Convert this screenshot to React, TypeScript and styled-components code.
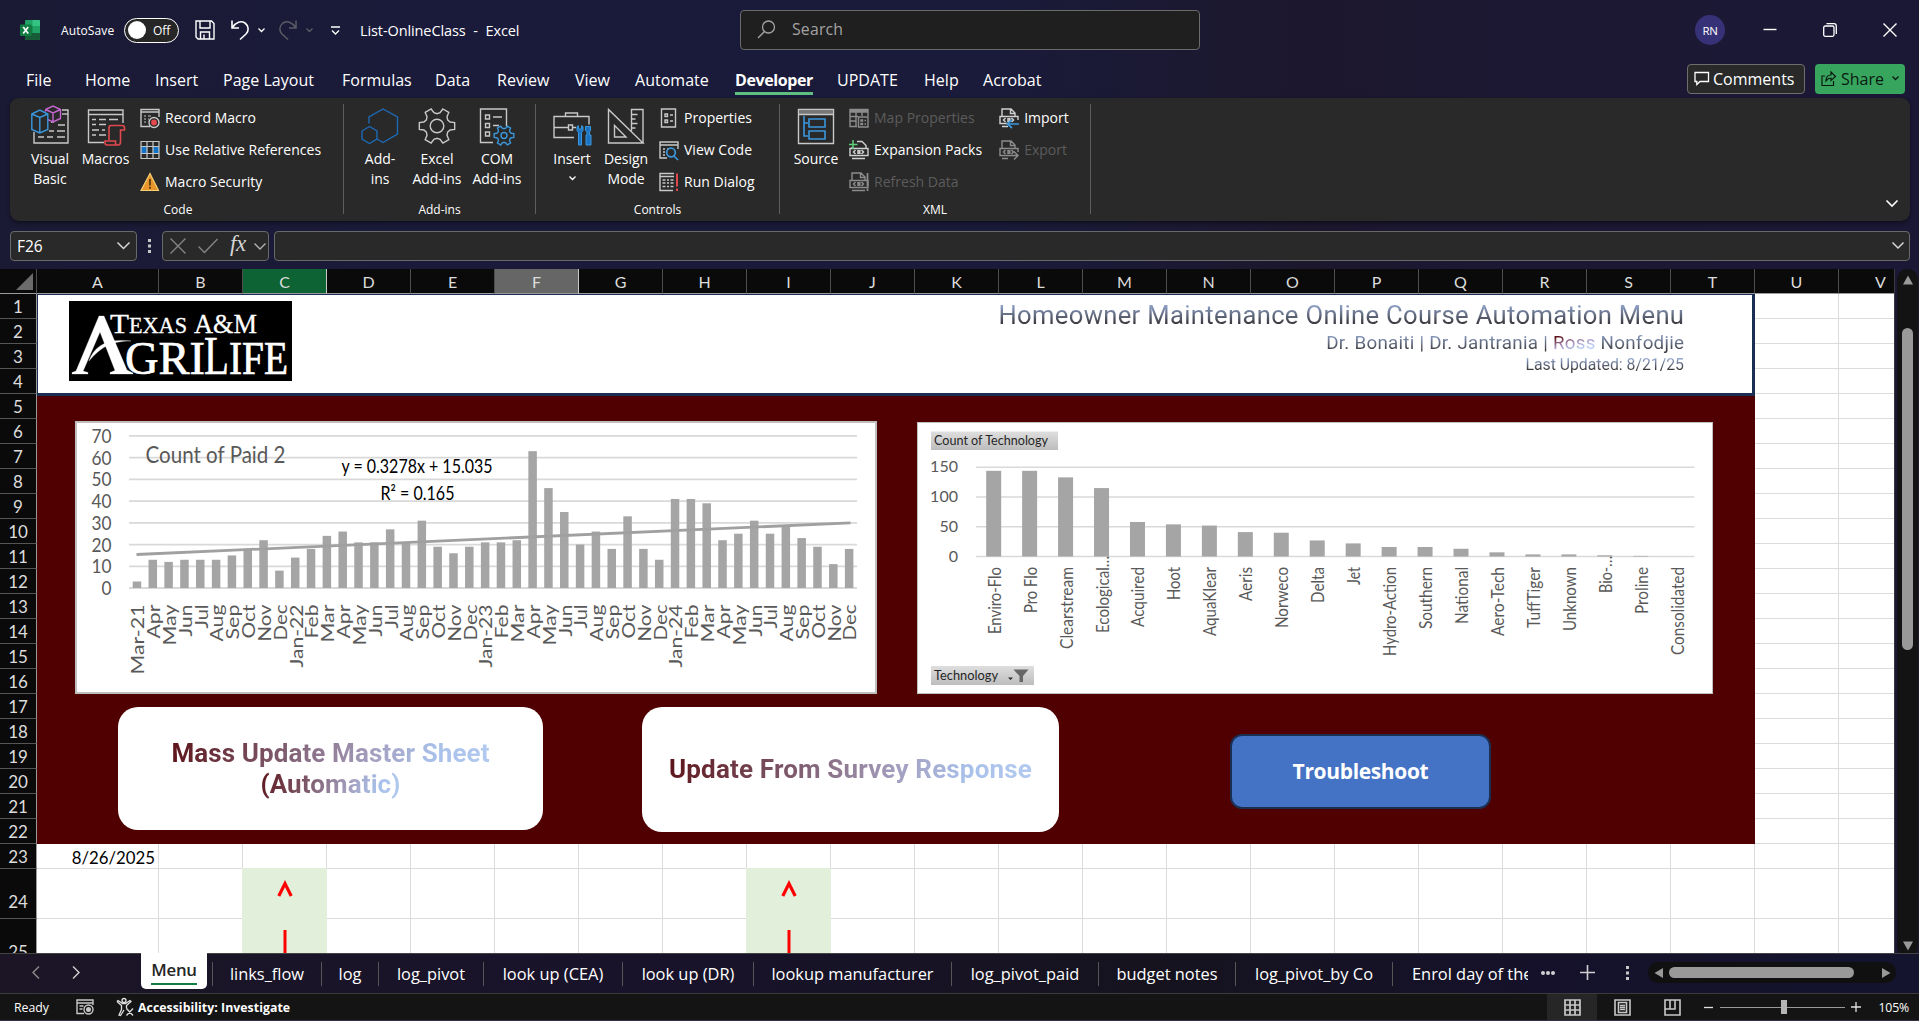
import React from "react";
import styled, { createGlobalStyle, css } from "styled-components";

const UI = `"Open Sans", "Noto Sans", sans-serif`;
const CALIBRI = `Lato, "Open Sans", sans-serif`;

const Global = createGlobalStyle`
  * { box-sizing: border-box; }
  html, body { margin: 0; padding: 0; overflow: hidden; }
  body { font-family: ${UI}; color: #fff; background: #1a1935; }
  svg { display: block; flex: none; overflow: visible; }
`;

const Window = styled.div`
  width: 1919px;
  height: 1021px;
  display: flex;
  flex-direction: column;
  background: linear-gradient(90deg, #1b1a35 0%, #1a1b3a 22%, #1a1b3a 52%, #1c172d 68%, #1c1833 78%, #1b1836 100%);
`;

/* ---------- title bar ---------- */
const TitleBar = styled.header`
  height: 60px;
  flex: none;
  display: flex;
  align-items: center;
`;
const TitleLeft = styled.div`
  width: 740px;
  padding-left: 20px;
  display: flex;
  align-items: center;
`;
const AutoSave = styled.span`
  font-size: 12px;
  margin: 1px 9px 0 21px;
  width: 54px;
  white-space: nowrap;
  letter-spacing: 0.1px;
`;
const Toggle = styled.div`
  width: 55px;
  height: 25px;
  border: 1px solid #fff;
  border-radius: 13px;
  background: #262626;
  display: flex;
  align-items: center;
  gap: 7px;
  padding-left: 3px;
  font-size: 12px;
  margin-right: 16px;
`;
const Knob = styled.i`
  width: 18px;
  height: 18px;
  border-radius: 50%;
  background: #fff;
`;
const Gap = styled.span<{ $w: number }>`
  width: ${(p) => p.$w}px;
  flex: none;
`;
const DocTitle = styled.span`
  font-size: 14.5px;
  word-spacing: 4px;
  letter-spacing: -0.1px;
  white-space: nowrap;
`;
const SearchBox = styled.div`
  width: 460px;
  height: 40px;
  border: 1px solid #6a6a6a;
  border-radius: 4px;
  background: #1f1f1f;
  color: #a3a3a3;
  display: flex;
  align-items: center;
  gap: 16px;
  padding: 0 0 2px 16px;
  font-size: 15.8px;
  letter-spacing: 0.2px;
`;
const TitleRight = styled.div`
  flex: 1;
  display: flex;
  align-items: center;
  padding-left: 495px;
`;
const Avatar = styled.div`
  width: 30px;
  height: 30px;
  border-radius: 50%;
  background: #373277;
  display: grid;
  place-items: center;
  font-size: 11.5px;
  letter-spacing: -0.4px;
  margin-right: 38px;
`;

/* ---------- ribbon tabs ---------- */
const TabRow = styled.nav`
  height: 38px;
  flex: none;
  display: flex;
  align-items: flex-start;
  padding: 4px 14px 0 26px;
`;
const RibbonTab = styled.div<{ $w: number; $on?: boolean }>`
  width: ${(p) => p.$w}px;
  height: 31px;
  line-height: 33px;
  font-size: 16px;
  letter-spacing: 0.02px;
  white-space: nowrap;
  span {
    display: inline-block;
    height: 31px;
    ${(p) => p.$on && css`
      font-weight: 700;
      letter-spacing: -0.4px;
      border-bottom: 3px solid #5fbf80;
    `}
  }
`;
const Spacer = styled.div`
  flex: 1;
`;
const CommentsButton = styled.button`
  width: 118px;
  height: 30px;
  border: 1px solid #6e6e6e;
  border-radius: 4px;
  background: #292929;
  color: #fff;
  display: flex;
  align-items: center;
  gap: 4px;
  padding: 0 0 1px 6px;
  font: 16px ${UI};
  letter-spacing: 0;
  margin-right: 10px;
`;
const ShareButton = styled(CommentsButton)`
  width: 90px;
  border: 0;
  background: #38a55f;
  color: #0a1a10;
  gap: 5px;
  margin: 0;
  svg:last-child { margin-left: 3px; }
`;

/* ---------- ribbon ---------- */
const Ribbon = styled.section`
  height: 123px;
  margin: 0 9px 0 10px;
  flex: none;
  border-radius: 9px;
  background: #292929;
  display: flex;
  padding-top: 6px;
  box-shadow: 0 2px 4px rgba(0, 0, 0, 0.45);
`;
const Group = styled.div<{ $w: number }>`
  width: ${(p) => p.$w}px;
  height: 110px;
  border-right: 1px solid #5e5e5e;
  display: flex;
  flex-direction: column;
`;
const GroupBody = styled.div<{ $pl: number }>`
  height: 96px;
  flex: none;
  padding-left: ${(p) => p.$pl}px;
  display: flex;
  align-items: flex-start;
`;
const GroupName = styled.div<{ $left?: number }>`
  font-size: 12px;
  line-height: 19px;
  text-align: center;
  padding-left: ${(p) => p.$left ?? 0}px;
`;
const BigButton = styled.div<{ $w: number }>`
  width: ${(p) => p.$w}px;
  flex: none;
  display: flex;
  flex-direction: column;
  align-items: center;
`;
const BigIcon = styled.div`
  height: 45px;
  padding-top: 2px;
`;
const BigLabel = styled.span`
  font-size: 14px;
  line-height: 20px;
  text-align: center;
  white-space: pre;
  letter-spacing: -0.05px;
`;
const MenuMark = styled.span`
  padding-top: 7px;
`;
const SmallStack = styled.div<{ $ml?: number }>`
  display: flex;
  flex-direction: column;
  margin-left: ${(p) => p.$ml ?? 0}px;
`;
const SmallButton = styled.div<{ $off?: boolean }>`
  height: 32px;
  display: flex;
  align-items: center;
  gap: 5px;
  font-size: 14px;
  letter-spacing: 0.02px;
  white-space: nowrap;
  padding-bottom: 5px;
  span { color: ${(p) => (p.$off ? "#5c5c5c" : "#fff")}; }
`;
const RibbonEnd = styled.div`
  flex: 1;
  display: flex;
  align-items: flex-end;
  justify-content: flex-end;
  padding: 0 12px 14px 0;
`;

/* ---------- formula bar ---------- */
const FormulaRow = styled.div`
  height: 48px;
  flex: none;
  display: flex;
  align-items: center;
  padding: 2px 9px 0 10px;
`;
const Box = styled.div<{ $w?: number }>`
  ${(p) => (p.$w ? `width: ${p.$w}px;` : "flex: 1;")}
  height: 30px;
  border: 1px solid #696969;
  border-radius: 4px;
  background: #292929;
  display: flex;
  align-items: center;
`;
const NameBox = styled(Box)`
  justify-content: space-between;
  padding: 0 6px;
  font-size: 15.5px;
  margin-right: 11px;
`;
const FxBox = styled(Box)`
  padding-left: 7px;
  margin: 0 5px 0 11px;
`;
const Fx = styled.span`
  font: italic 23px "Liberation Serif", serif;
  letter-spacing: -0.5px;
  color: #d6d6d6;
  margin: -4px 8px 0 12px;
`;
const FormulaInput = styled(Box)`
  justify-content: flex-end;
  padding: 0 5px 2px 0;
`;

/* ---------- sheet ---------- */
const SheetArea = styled.main`
  height: 684px;
  flex: none;
  display: flex;
`;
const Sheet = styled.div`
  width: 1894px;
  height: 684px;
  overflow: hidden;
  position: relative;
  background: #fff;
`;
const GridRow = styled.div<{ $h: number }>`
  display: grid;
  grid-template-columns: 37px 122px repeat(20, 84px) 84px;
  grid-template-rows: ${(p) => p.$h}px;
  height: ${(p) => p.$h}px;
  width: 1923px;
`;
const HeadCell = styled.div<{ $sel?: "green" | "gray" }>`
  background: ${(p) => (p.$sel === "green" ? "#0e6335" : p.$sel === "gray" ? "#666" : "#0a0a0a")};
  border-right: 1px solid ${(p) => (p.$sel ? "#c9c9c9" : "#4d4d4d")};
  border-bottom: 1px solid #9a9a9a;
  color: #dcdcdc;
  font: 16px/25px ${CALIBRI};
  text-align: center;
`;
const Corner = styled.div`
  background: #0a0a0a;
  border-right: 1px solid #4d4d4d;
  border-bottom: 1px solid #9a9a9a;
  display: flex;
  align-items: flex-end;
  justify-content: flex-end;
  padding: 0 3px 3px 0;
`;
const RowHead = styled.div<{ $tall: boolean }>`
  background: #0a0a0a;
  border-right: 1px solid #9a9a9a;
  border-bottom: 1px solid #555;
  color: #dcdcdc;
  font: 17px ${CALIBRI};
  display: grid;
  place-items: center;
  overflow: hidden;
  padding-top: ${(p) => (p.$tall ? 16 : 1)}px;
`;
const Cell = styled.div<{ $green?: boolean }>`
  border-right: 1px solid #dcdcdc;
  border-bottom: 1px solid #dcdcdc;
  color: #000;
  font: 16.8px/27px ${CALIBRI};
  text-align: right;
  padding-right: 3px;
  ${(p) => p.$green && css`
    background: #e2efda;
    border-color: #e2efda;
    margin-left: -1px;
    margin-top: -1px;
    padding: 0 0 0 1px;
    display: flex;
    justify-content: center;
  `}
`;

/* shapes floating over the cells */
const Shape = styled.div<{ $x: number; $y: number; $w: number; $h: number }>`
  position: absolute;
  left: ${(p) => p.$x}px;
  top: ${(p) => p.$y - 269}px;
  width: ${(p) => p.$w}px;
  height: ${(p) => p.$h}px;
`;
const Banner = styled(Shape)`
  background: #fff;
  border: solid #1b2f52;
  border-width: 1px 3px 3px 1px;
  padding: 6px 68px 0 31px;
  display: flex;
  justify-content: space-between;
`;
const Backdrop = styled(Shape)`
  background: #500000;
`;
const Heading = styled.div`
  display: flex;
  flex-direction: column;
  align-items: flex-end;
  font-family: Roboto, sans-serif;
  white-space: nowrap;
  margin-top: -1px;
`;
const HeadLine = styled.div<{ $size: number; $lh: number; $ls: number }>`
  display: flex;
  white-space: pre;
  font-size: ${(p) => p.$size}px;
  line-height: ${(p) => p.$lh}px;
  letter-spacing: ${(p) => p.$ls}px;
  margin-right: -${(p) => p.$ls}px;
`;
const Steel = styled.span`
  color: transparent;
  background: linear-gradient(180deg, #93a7cf 15%, #3b3b3f 78%);
  background-clip: text;
`;
const Ross = styled.span`
  color: transparent;
  background: linear-gradient(165deg, #5f1219 22%, #a893bd 48%, #b8cdf5 70%);
  background-clip: text;
`;
const ChartFrame = styled(Shape)<{ $b: number }>`
  background: #fff;
  border: ${(p) => p.$b}px solid #bfbfbf;
  svg { margin: -${(p) => p.$b}px; }
`;
const Macro = styled(Shape)`
  background: #fff;
  border-radius: 20px;
  display: flex;
  flex-direction: column;
  align-items: center;
  justify-content: center;
  font: 700 26px/31px Roboto, sans-serif;
  white-space: nowrap;
`;
const Shaded = styled.span<{ $ls: number }>`
  letter-spacing: ${(p) => p.$ls}px;
  color: transparent;
  background: linear-gradient(108deg, #5c1318 0%, #7e5a6c 35%, #a39dbd 62%, #a9c1ea 82%, #b3caf0 100%);
  background-clip: text;
`;
const Trouble = styled(Shape)`
  background: #4472c4;
  border: 2px solid #1b2f52;
  border-radius: 12px;
  display: grid;
  place-items: center;
  font: 700 21px ${UI};
  letter-spacing: -0.35px;
  padding-bottom: 2px;
`;
const ScrollGutter = styled.div`
  width: 25px;
  padding: 0 2px;
  border-left: 1px solid #3a3a3a;
`;
const VTrack = styled.div`
  height: 688px;
  width: 21px;
  border-radius: 10px;
  background: #131313;
  display: flex;
  flex-direction: column;
  align-items: center;
  padding: 6px 0;
`;
const VThumb = styled.div`
  width: 11px;
  height: 322px;
  border-radius: 6px;
  background: #999;
  margin: 43px 0 auto;
`;

/* ---------- sheet tabs ---------- */
const SheetTabs = styled.div`
  height: 40px;
  flex: none;
  display: flex;
  align-items: flex-start;
  background: linear-gradient(90deg, #1b1526 0%, #18132a 35%, #16131f 60%, #15112a 80%, #14142e 100%);
  border-top: 1px solid #444;
`;
const TabNav = styled.div`
  width: 141px;
  height: 37px;
  display: flex;
  align-items: center;
  gap: 32px;
  padding-left: 32px;
`;
const ActiveTab = styled.div`
  width: 66px;
  height: 36px;
  margin-top: -1px;
  background: #fff;
  border-radius: 0 0 5px 5px;
  color: #262626;
  font: 600 16.8px/33px ${UI};
  letter-spacing: -0.2px;
  display: flex;
  justify-content: center;
  margin-right: 5px;
  span { height: 32px; border-bottom: 2px solid #107c41; }
`;
const SheetTab = styled.div<{ $w: number; $last?: boolean }>`
  width: ${(p) => p.$w}px;
  height: 24px;
  margin-top: 8px;
  border-left: 1px solid #565656;
  font-size: 16.4px;
  letter-spacing: 0;
  line-height: 24px;
  text-align: ${(p) => (p.$last ? "left" : "center")};
  padding-left: ${(p) => (p.$last ? 19 : 0)}px;
  white-space: nowrap;
  overflow: hidden;
`;
const TabTools = styled.div`
  height: 37px;
  flex: 1;
  display: flex;
  align-items: center;
  padding-left: 13px;
`;
const HTrack = styled.div`
  width: 248px;
  height: 21px;
  border-radius: 10px;
  background: #101010;
  display: flex;
  align-items: center;
  padding: 0 5px 0 6px;
  justify-content: space-between;
`;
const HThumb = styled.div`
  width: 185px;
  height: 11px;
  border-radius: 6px;
  background: #999;
  margin: 0 auto 0 5px;
`;

/* ---------- status bar ---------- */
const StatusBar = styled.footer`
  height: 28px;
  flex: none;
  background: #141414;
  border-top: 1px solid #3b3b3b;
  border-bottom: 1px solid #30304a;
  display: flex;
  align-items: center;
  font-size: 12.3px;
  padding: 0 10px 0 14px;
`;
const Ready = styled.span`
  width: 62px;
`;
const Access = styled.b`
  margin-left: 4px;
  letter-spacing: 0.04px;
`;
const ViewButton = styled.div<{ $on?: boolean }>`
  width: 50px;
  height: 26px;
  display: grid;
  place-items: center;
  background: ${(p) => (p.$on ? "#262626" : "none")};
`;
const Slider = styled.div`
  width: 125px;
  height: 14px;
  margin: 0 6px 0 7px;
  background: linear-gradient(#9a9a9a, #9a9a9a) center / 100% 1px no-repeat;
  padding-left: 61px;
`;
const Handle = styled.div`
  width: 6px;
  height: 14px;
  background: #b5b5b5;
`;
const Zoom = styled.span`
  width: 48px;
  text-align: right;
  letter-spacing: -0.2px;
`;

/* ---------- icons ---------- */
const Chev = ({ w = 8, c = "#fff", s = 1.3 }: { w?: number; c?: string; s?: number }) => (
  <svg width={w} height={w / 2 + 1} fill="none" stroke={c} strokeWidth={s}>
    <path d={`M0.5 0.5 L${w / 2} ${w / 2} L${w - 0.5} 0.5`} />
  </svg>
);

const Icon = ({ w = 20, h = 20, c = "#c8c8c8", s = 1.4, children }: any) => (
  <svg width={w} height={h} viewBox={`0 0 ${w} ${h}`} fill="none" stroke={c} strokeWidth={s}>
    {children}
  </svg>
);

const ExcelLogo = () => (
  <svg width="20" height="20">
    <rect x="5" y="0" width="15" height="20" rx="1.2" fill="#21a366" />
    <path d="M12.5 0H19a1 1 0 0 1 1 1v5h-7.5z" fill="#33c481" />
    <path d="M5 6h7.5v7H5z" fill="#107c41" />
    <path d="M5 13h15v6a1 1 0 0 1-1 1H6a1 1 0 0 1-1-1z" fill="#185c37" />
    <rect x="0" y="4.5" width="11.5" height="11.5" rx="1" fill="#107c41" />
    <path d="M3.2 7l5 6.6M8.2 7l-5 6.6" stroke="#fff" strokeWidth="1.7" />
  </svg>
);

const VisualBasicIcon = () => (
  <Icon w={38} h={40}>
    <path d="M31 4h6v33H3V26" />
    <path d="M31 8h6" />
    <path d="M20 16h3M27 19h7M18 25h5M26 25h8M7 31h6M16 31h6M26 31h8" />
    <g transform="translate(0 -1)">
      <path d="M0.8 9l8-4 8 4v15.500l-8 3.500-8-3.500zM0.800 9l8 3.500 8-3.500M8.800 12.500V28" stroke="#3a97dc" />
      <path d="M14.500 4.500l7.500-3.500 7.500 3.500v9l-7.500 3.500-5-2.300M14.500 4.500l7.500 3.500 7.500-3.500M22 8v9M14.500 4.500v2" stroke="#c566d0" />
    </g>
  </Icon>
);
const MacrosIcon = () => (
  <Icon w={38} h={40}>
    <path d="M17 36.500H1.500V4h34.500v13M1 8.500h35" />
    <path d="M5 13.500h4M12 13.500h7M22 13.500h9M5 18.500h4M12 18.500h7M5 24h7M15 24h3M5 29h4M12 29h7" />
    <path d="M22 34V22q0-2.500 2-2.500h11q2.500 0 2.500 2.500v2h-4v12q0 3-2.500 3H20q-2 0-2-2.500V35h10.500v2q0 2 2 2" stroke="#e0484d" strokeWidth="1.600" />
  </Icon>
);
const AddinsIcon = () => (
  <Icon w={38} h={40} c="#1e69b4">
    <path d="M8 17.500V11L22 3l14.500 8v17L22 36.500l-6-3.500" />
    <path d="M1 25l7.500-4.500L16 25v8l-7.500 4.500L1 33z" />
  </Icon>
);
const gear = (cx: number, cy: number, r: number) => {
  let d = "";
  for (let i = 0; i < 6; i++) {
    const pt = (deg: number, k: number) => {
      const a = ((i * 60 + deg) * Math.PI) / 180;
      return `${(cx + Math.sin(a) * r * k).toFixed(2)} ${(cy - Math.cos(a) * r * k).toFixed(2)}`;
    };
    d += `${i ? "L" : "M"}${pt(-11, 1)}L${pt(11, 1)}L${pt(17, 0.76)}L${pt(30, 0.68)}L${pt(43, 0.76)}`;
  }
  return d + "Z";
};
const GearIcon = () => (
  <Icon w={38} h={40}>
    <path d={gear(19, 20, 18)} transform="rotate(30 19 20)" />
    <circle cx="19" cy="20" r="6.800" />
  </Icon>
);
const ComIcon = () => (
  <Icon w={38} h={40}>
    <path d="M15 36.500H2.500V3h26v17" />
    <path d="M7.500 9h4v4h-4zM7.500 17.500h4v4h-4zM7.500 26h4v4h-4zM15 11h9M15 19.500h6" />
    <path d={gear(26, 29.5, 10)} transform="rotate(30 26 29.500)" stroke="#3a97dc" />
    <circle cx="26" cy="29.500" r="3" stroke="#3a97dc" />
  </Icon>
);
const InsertIcon = () => (
  <Icon w={38} h={40}>
    <path d="M12.500 10V7h12v3M21 31.500H1V10.500h35v8M1 21.500h14M20 21.500h3M15.500 19h4v5h-4z" />
    <path d="M24 20.500v4l1.500 2V39h3V26.500l1.500-2v-4l-1.500-0.800v3.300h-3v-3.300z" stroke="#3a97dc" fill="#1a72c3" strokeWidth="1" />
    <path d="M32.500 20.500h5v4l-1 1.500v3h1.500v10h-5V29H34v-3l-1.500-1.500z" stroke="#3a97dc" fill="#1a72c3" strokeWidth="1" />
  </Icon>
);
const DesignIcon = () => (
  <Icon w={38} h={40}>
    <path d="M1.500 3.500v33.500h34.500zM7.500 19.500v11.500h11.500z" />
    <path d="M24.500 25V3.500H36V37M24.500 8.500h6M24.500 13h4M24.500 17.500h6M24.500 22h4" />
  </Icon>
);
const SourceIcon = () => (
  <Icon w={38} h={40}>
    <path d="M1.500 3.500h35v34h-35z" />
    <path d="M2 4h34v4H2z" fill="#777" stroke="none" />
    <path d="M1.500 8.500h35" />
    <path d="M7 10v20h4M7 17h4M12 13h16v8H12zM12 25h16v8H12z" stroke="#3a97dc" strokeWidth="1.600" />
  </Icon>
);
const RecordIcon = () => (
  <Icon>
    <path d="M10 18.500H1v-17h18V9M1 4h18" />
    <path d="M4 8h2M8 8h3M4 11h2M4 14h2M8 11h1" strokeWidth="1.200" />
    <circle cx="14" cy="14.500" r="5" /><circle cx="14" cy="14.500" r="2.900" fill="#e5484d" stroke="none" />
  </Icon>
);
const RelativeIcon = () => (
  <Icon s={1.2}>
    <path d="M1 7h18v6H1z" fill="#1273c8" stroke="none" />
    <path d="M7 6.500h6v7H7z" fill="#292929" stroke="none" />
    <path d="M1 1.500h18v17H1zM7 1.500v17M13 1.500v17M1 6.500h18M1 13.500h18" />
  </Icon>
);
const WarnIcon = () => (
  <svg width="20" height="20">
    <path d="M10 1.500L18.500 18.500H1z" fill="#e8952b" stroke="#f6cf73" strokeWidth="1.200" />
    <path d="M10 7v6.500M10 14.800v2" stroke="#3b2a10" strokeWidth="1.500" />
  </svg>
);
const PropsIcon = () => (
  <Icon>
    <path d="M2.500 1h14v18h-14z" /><path d="M6 6h2.500v2.500H6zM6 12h2.500v2.500H6zM11 7h3M11 13h3" />
  </Icon>
);
const ViewCodeIcon = () => (
  <Icon>
    <path d="M8 18H1V2h18v7M1 5h18M4 9h2M4 12h2M4 15h2M8 9h2" />
    <circle cx="12" cy="12.500" r="4.300" stroke="#3a97dc" strokeWidth="1.700" /><path d="M15 16l4 4" stroke="#3a97dc" strokeWidth="1.700" />
  </Icon>
);
const RunIcon = () => (
  <Icon>
    <path d="M14 18.500H1v-17h14M1 4.500h14" /><path d="M3.500 8h3M8 8h2M11.500 8h3M3.500 11h3M8 11h2M11.500 11h3M3.500 14.500h3M8 14.500h2M11.500 14.500h3" />
    <path d="M18 1.500v13M18 16.500v2.500" stroke="#e0484d" strokeWidth="2" />
  </Icon>
);
const MapIcon = () => (
  <Icon c="#8c8c8c">
    <path d="M8 18.500H1v-17h18V8M1 4h18M1 8.500h8M1 13h6M7 4v14M13 4v4" /><path d="M1 2h18v2H1z" fill="#8c8c8c" stroke="none" />
    <path d="M9.500 9h9.500v10H9.500zM12 12h1.500v1H12zM12 15.500h1.500v1H12zM15.500 12.500h1.500M15.500 16h1.500" />
  </Icon>
);
const XmlDoc = ({ c, mode }: { c: string; mode: "plus" | "bang" | "in" | "out" }) => (
  <Icon c={c}>
    <path d={mode === "plus" ? "M8 1.500h5l4 4V8M3 7v2" : "M3 8V1h9l4 4v3M11.500 1v4.500H16"} />
    <path d={mode === "plus" || mode === "bang" ? "M1 8.500h18v7H1zM3 18.500h13" : "M19 12V8.500H1v7h8M3 18.500h6"} />
    <path d="M6.500 10L4.500 12l2 2M12.500 10l2 2-2 2M9 10.800h1.800v2.400H9z" strokeWidth="1.500" />
    {mode === "plus" && <path d="M4 0v9M0 4.500h8.500" stroke="#5fcf7c" strokeWidth="1.500" />}
    {mode === "bang" && <path d="M18.500 1v13M18.500 16.500v2.500" strokeWidth="1.800" />}
    {mode === "in" && <path d="M20 16H9M13 11.500L8.500 16l4.500 4" stroke="#3a97dc" strokeWidth="1.700" />}
    {mode === "out" && <path d="M9 15.500h10M15 11.500l4 4-4 4" />}
  </Icon>
);

/* ---------- charts ---------- */
const MONTHS = ["Jan", "Feb", "Mar", "Apr", "May", "Jun", "Jul", "Aug", "Sep", "Oct", "Nov", "Dec"];
const MONTH_LEN: Record<string, number> = { Jan: 34, Feb: 34, Mar: 38, Apr: 34, May: 41, Jun: 32, Jul: 24, Aug: 37, Sep: 35, Oct: 34, Nov: 37, Dec: 36 };
const PAID = [
  3, 13, 12, 13, 13, 13, 15, 18, 22, 8,
  14, 18, 24, 26, 21, 21, 27, 21, 31, 19, 16, 19,
  21, 21, 22, 63, 46, 35, 20, 26, 18, 33, 18, 13,
  41, 41, 39, 22, 25, 31, 25, 29, 23, 19, 11, 18,
];

const PaidChart = () => {
  const step = 728 / PAID.length;
  const x = (i: number) => 54 + step * (i + 0.5);
  const y = (v: number) => 167 - v * 2.172;
  return (
    <svg width="802" height="273" fontFamily='Lato, "Open Sans", sans-serif' fill="#595959">
      {[0, 10, 20, 30, 40, 50, 60, 70].map((v) => (
        <g key={v}>
          <path d={`M54 ${y(v)}H782`} stroke="#d9d9d9" strokeWidth="1.800" />
          <text x="36.500" y={y(v) + 7} fontSize="20" textAnchor="end" textLength={v ? 20 : 10} lengthAdjust="spacingAndGlyphs">{v}</text>
        </g>
      ))}
      {PAID.map((v, i) => <rect key={i} x={x(i) - 4.2} y={y(v)} width="8.500" height={v * 2.172} fill="#a5a5a5" />)}
      <path d="M61.500 133.500L775.500 101.800" stroke="#a0a0a0" strokeWidth="2.800" />
      <text x="70.500" y="42" fontSize="23" textLength="140" lengthAdjust="spacingAndGlyphs">Count of Paid 2</text>
      <g fill="#000" fontSize="19">
        <text x="266.500" y="52" textLength="151" lengthAdjust="spacingAndGlyphs">y = 0.3278x + 15.035</text>
        <text x="305.500" y="79" textLength="74" lengthAdjust="spacingAndGlyphs">R² = 0.165</text>
      </g>
      {PAID.map((_, i) => {
        const m = MONTHS[(i + 2) % 12];
        const label = i === 0 ? "Mar-21" : m === "Jan" ? `Jan-${21 + Math.floor((i + 2) / 12)}` : m;
        const len = i === 0 ? 70 : m === "Jan" ? 63 : MONTH_LEN[m];
        return (
          <text key={i} transform={`translate(${x(i) + 7.4} 183.500) rotate(-90)`} textAnchor="end" fontSize="16.500" textLength={len} lengthAdjust="spacingAndGlyphs">{label}</text>
        );
      })}
    </svg>
  );
};

const TECH: [string, number, number][] = [
  ["Enviro-Flo", 144, 67], ["Pro Flo", 144, 46], ["Clearstream", 133, 82], ["Ecological…", 115, 77], ["Acquired", 58, 60],
  ["Hoot", 54, 33], ["AquaKlear", 52, 69], ["Aeris", 41, 34], ["Norweco", 40, 61], ["Delta", 27, 36], ["Jet", 22, 18],
  ["Hydro-Action", 16, 89], ["Southern", 16, 62], ["National", 13, 57], ["Aero-Tech", 7, 69], ["TuffTiger", 3.5, 61],
  ["Unknown", 3.5, 64], ["Bio-…", 2, 37], ["Proline", 1, 47], ["Consolidated", 0, 88],
];

const TechChart = () => {
  const step = 719 / 20;
  const x = (i: number) => 58.7 + step * (i + 0.5);
  const y = (v: number) => 134.5 - v * 0.595;
  return (
    <svg width="796" height="272" fontFamily='Lato, "Open Sans", sans-serif' fill="#595959">
      <defs>
        <linearGradient id="badge" x2="0" y2="1"><stop stopColor="#dedede" /><stop offset="1" stopColor="#bdbdbd" /></linearGradient>
      </defs>
      {[0, 50, 100, 150].map((v) => (
        <g key={v}>
          <path d={`M59 ${y(v)}H777.500`} stroke="#d9d9d9" strokeWidth="1.300" />
          <text x="41" y={y(v) + 5} fontSize="15" textAnchor="end" textLength={String(v).length * 9.3} lengthAdjust="spacingAndGlyphs">{v}</text>
        </g>
      ))}
      {TECH.map(([name, v, len], i) => (
        <g key={name}>
          <rect x={x(i) - 7.5} y={y(v)} width="15" height={v * 0.595} fill="#a5a5a5" />
          <text transform={`translate(${x(i) + 7} ${name.endsWith("…") ? 134 : 145}) rotate(-90)`} textAnchor="end" fontSize="16.500" textLength={len} lengthAdjust="spacingAndGlyphs">{name}</text>
        </g>
      ))}
      <rect x="14" y="9.500" width="127" height="18.500" fill="url(#badge)" />
      <rect x="14" y="244" width="103" height="19" fill="url(#badge)" />
      <g fill="#262626" fontSize="12.500">
        <text x="17" y="22.700" textLength="114" lengthAdjust="spacingAndGlyphs">Count of Technology</text>
        <text x="17" y="257.500" textLength="64" lengthAdjust="spacingAndGlyphs">Technology</text>
        <path d="M91 255.500h5l-2.500 2.500z" />
        <path d="M96.500 247.500h15l-5.500 6.500v6h-3.500v-6z" fill="#666" />
      </g>
    </svg>
  );
};

const AgriLogo = () => (
  <svg width="223" height="80" fontFamily='"Liberation Serif", serif' fill="#fff" stroke="#fff" strokeWidth="0.300">
    <rect width="223" height="80" fill="#000" stroke="none" />
    <text x="41" y="32" fontSize="28" textLength="19" lengthAdjust="spacingAndGlyphs">T</text>
    <text x="60" y="32" fontSize="23" textLength="58" lengthAdjust="spacingAndGlyphs">EXAS</text>
    <text x="125" y="32" fontSize="27" textLength="63" lengthAdjust="spacingAndGlyphs">A&amp;M</text>
    <path d="M3 73v-1.500l4-1.500L30 15h5l23 54 6 3v1H41v-1.500l5-2L31 31 15 68l-1 2 5 1.500V73z" />
    <path d="M20 60C25 45 38 37 62 40C42 40 32 46 20 60z" />
    <text x="56" y="73" fontSize="46" strokeWidth="0.700" textLength="80" lengthAdjust="spacingAndGlyphs">GRI</text>
    <text x="135" y="73" fontSize="54" strokeWidth="0.500" textLength="25" lengthAdjust="spacingAndGlyphs">L</text>
    <text x="160" y="73" fontSize="46" strokeWidth="0.700" textLength="59" lengthAdjust="spacingAndGlyphs">IFE</text>
  </svg>
);

const Arrow = ({ d }: { d: string }) => <svg width="10" height="10" fill="#999"><path d={d} /></svg>;

/* ---------- data ---------- */
const RIBBON_TABS: [string, number][] = [
  ["File", 59], ["Home", 70], ["Insert", 68], ["Page Layout", 119], ["Formulas", 93], ["Data", 62], ["Review", 78],
  ["View", 60], ["Automate", 100], ["Developer", 102], ["UPDATE", 87], ["Help", 59], ["Acrobat", 80],
];
const SHEETS: [string, number][] = [
  ["links_flow", 109], ["log", 57], ["log_pivot", 105], ["look up (CEA)", 139], ["look up (DR)", 131],
  ["lookup manufacturer", 198], ["log_pivot_paid", 147], ["budget notes", 137], ["log_pivot_by Co", 157],
];
const COLS = "ABCDEFGHIJKLMNOPQRSTUV".split("");
const ROWS = Array.from({ length: 25 }, (_, i) => i + 1);

const Mark = ({ row }: { row: number }) => (
  <svg width="16" height="50" fill="none" stroke="#f00">
    {row === 24 ? <path d="M1.800 28L8 15.500l6.200 12.500" strokeWidth="3.200" /> : <path d="M8 12v40" strokeWidth="3" />}
  </svg>
);

export default function App() {
  return (
    <>
      <Global />
      <Window>
        <TitleBar>
          <TitleLeft>
            <ExcelLogo />
            <AutoSave>AutoSave</AutoSave>
            <Toggle><Knob />Off</Toggle>
            <Icon c="#fff">
              <path d="M1 1h15.500L19 3.500V19H3l-2-2zM5 1v7h10V1M5.500 19v-7h9v7M9 14.500V19" />
            </Icon>
            <Gap $w={16} />
            <Icon w={18} c="#fff" s={1.6}><path d="M1 0.500V8h7M1.500 7.500C5 2 10 0.500 14 3c4 3 4 8 1 11l-6 5.500" /></Icon>
            <Gap $w={9} /><Chev w={7} /><Gap $w={14} />
            <Icon w={18} c="#5b5b66" s={1.5}><path d="M17 0.500V8h-7M16.500 7.500C13 2 8 0.500 4 3c-4 3-4 8-1 11l6 5.500" /></Icon>
            <Gap $w={9} /><Chev w={7} c="#5b5b66" /><Gap $w={18} />
            <Icon w={9} h={9} c="#fff" s={1.3}><path d="M0 1h9M1 4.500L4.500 8 8 4.500" /></Icon>
            <Gap $w={20} />
            <DocTitle>List-OnlineClass - Excel</DocTitle>
          </TitleLeft>
          <SearchBox>
            <Icon w={19} h={19} c="#a3a3a3" s={1.3}><circle cx="11.500" cy="7" r="6" /><path d="M7.500 11.500L1 18" /></Icon>
            Search
          </SearchBox>
          <TitleRight>
            <Avatar>RN</Avatar>
            <Icon w={14} h={14} c="#fff"><path d="M0.500 6.500h13" /></Icon>
            <Gap $w={46} />
            <Icon w={14} h={14} c="#fff" s={1.3}>
              <rect x="0.700" y="3" width="10.300" height="10.300" rx="1.500" /><path d="M3.500 0.700H11Q13.300 0.700 13.300 3v8" />
            </Icon>
            <Gap $w={46} />
            <Icon w={14} h={14} c="#fff"><path d="M0.500 0.500l13 13M13.500 0.500l-13 13" /></Icon>
          </TitleRight>
        </TitleBar>

        <TabRow>
          {RIBBON_TABS.map(([t, w]) => (
            <RibbonTab key={t} $w={w} $on={t === "Developer"}><span>{t}</span></RibbonTab>
          ))}
          <Spacer />
          <CommentsButton>
            <Icon w={15} h={15} c="#fff" s={1.3}><path d="M1 1.500h13.500v9H6L2.800 13.500v-3H1z" /></Icon>
            Comments
          </CommentsButton>
          <ShareButton>
            <Icon w={15} h={15} c="#0a1a10" s={1.2}>
              <path d="M4 5H1v9.500h11.500V10M5 10c0-4 2-6 5-6V1l4.500 4.500L10 9.500V7C8 7 6.500 8 5 10z" />
            </Icon>
            Share
            <Chev w={7} c="#0a1a10" />
          </ShareButton>
        </TabRow>

        <Ribbon>
          <Group $w={334}>
            <GroupBody $pl={13}>
              <BigButton $w={54}><BigIcon><VisualBasicIcon /></BigIcon><BigLabel>{"Visual\nBasic"}</BigLabel></BigButton>
              <BigButton $w={57}><BigIcon><MacrosIcon /></BigIcon><BigLabel>Macros</BigLabel></BigButton>
              <SmallStack $ml={6}>
                <SmallButton><RecordIcon /><span>Record Macro</span></SmallButton>
                <SmallButton><RelativeIcon /><span>Use Relative References</span></SmallButton>
                <SmallButton><WarnIcon /><span>Macro Security</span></SmallButton>
              </SmallStack>
            </GroupBody>
            <GroupName $left={3}>Code</GroupName>
          </Group>
          <Group $w={192}>
            <GroupBody $pl={8}>
              <BigButton $w={56}><BigIcon><AddinsIcon /></BigIcon><BigLabel>{"Add-\nins"}</BigLabel></BigButton>
              <BigButton $w={58}><BigIcon><GearIcon /></BigIcon><BigLabel>{"Excel\nAdd-ins"}</BigLabel></BigButton>
              <BigButton $w={62}><BigIcon><ComIcon /></BigIcon><BigLabel>{"COM\nAdd-ins"}</BigLabel></BigButton>
            </GroupBody>
            <GroupName>Add-ins</GroupName>
          </Group>
          <Group $w={244}>
            <GroupBody $pl={9}>
              <BigButton $w={54}>
                <BigIcon><InsertIcon /></BigIcon><BigLabel>Insert</BigLabel>
                <MenuMark><Chev w={7} /></MenuMark>
              </BigButton>
              <BigButton $w={54}><BigIcon><DesignIcon /></BigIcon><BigLabel>{"Design\nMode"}</BigLabel></BigButton>
              <SmallStack $ml={6}>
                <SmallButton><PropsIcon /><span>Properties</span></SmallButton>
                <SmallButton><ViewCodeIcon /><span>View Code</span></SmallButton>
                <SmallButton><RunIcon /><span>Run Dialog</span></SmallButton>
              </SmallStack>
            </GroupBody>
            <GroupName>Controls</GroupName>
          </Group>
          <Group $w={311}>
            <GroupBody $pl={8}>
              <BigButton $w={56}><BigIcon><SourceIcon /></BigIcon><BigLabel>Source</BigLabel></BigButton>
              <SmallStack $ml={5}>
                <SmallButton $off><MapIcon /><span>Map Properties</span></SmallButton>
                <SmallButton><XmlDoc c="#d0d0d0" mode="plus" /><span>Expansion Packs</span></SmallButton>
                <SmallButton $off><XmlDoc c="#8c8c8c" mode="bang" /><span>Refresh Data</span></SmallButton>
              </SmallStack>
              <SmallStack $ml={17}>
                <SmallButton><XmlDoc c="#d0d0d0" mode="in" /><span>Import</span></SmallButton>
                <SmallButton $off><XmlDoc c="#8c8c8c" mode="out" /><span>Export</span></SmallButton>
              </SmallStack>
            </GroupBody>
            <GroupName>XML</GroupName>
          </Group>
          <RibbonEnd><Chev w={12} s={1.6} /></RibbonEnd>
        </Ribbon>

        <FormulaRow>
          <NameBox $w={127}>F26<Chev w={13} c="#d6d6d6" s={1.5} /></NameBox>
          <Icon w={3} h={14} c="none"><path d="M0 0h3v3H0zM0 5.500h3v3H0zM0 11h3v3H0z" fill="#c8c8c8" /></Icon>
          <FxBox $w={107}>
            <Icon w={16} h={16} c="#858585"><path d="M0.500 0.500l15 15M15.500 0.500l-15 15" /></Icon>
            <Gap $w={12} />
            <Icon w={20} h={16} c="#858585"><path d="M0.500 8.500l6 6L19.500 1" /></Icon>
            <Fx>fx</Fx>
            <Chev w={12} c="#b0b0b0" s={1.4} />
          </FxBox>
          <FormulaInput><Chev w={12} c="#d6d6d6" s={1.5} /></FormulaInput>
        </FormulaRow>

        <SheetArea>
          <Sheet>
            <GridRow $h={25}>
              <Corner><svg width="17" height="17" fill="#6b6b6b"><path d="M17 0v17H0z" /></svg></Corner>
              {COLS.map((c) => <HeadCell key={c} $sel={c === "C" ? "green" : c === "F" ? "gray" : undefined}>{c}</HeadCell>)}
            </GridRow>
            {ROWS.map((r) => (
              <GridRow key={r} $h={r >= 24 ? 50 : 25}>
                <RowHead $tall={r >= 24}>{r}</RowHead>
                {COLS.map((c) => {
                  const green = r >= 24 && (c === "C" || c === "I");
                  return (
                    <Cell key={c} $green={green}>
                      {green && <Mark row={r} />}
                      {r === 23 && c === "A" && "8/26/2025"}
                    </Cell>
                  );
                })}
              </GridRow>
            ))}

            <Backdrop $x={37} $y={396} $w={1718} $h={448} />
            <Banner $x={37} $y={294} $w={1718} $h={102}>
              <AgriLogo />
              <Heading>
                <HeadLine $size={25.6} $lh={30} $ls={0.34}><Steel>Homeowner Maintenance Online Course Automation Menu</Steel></HeadLine>
                <HeadLine $size={18.8} $lh={26} $ls={0.26}>
                  <Steel>{"Dr. Bonaiti | Dr. Jantrania | "}</Steel><Ross>Ross</Ross><Steel>{" Nonfodjie"}</Steel>
                </HeadLine>
                <HeadLine $size={15.8} $lh={17} $ls={0}><Steel>Last Updated: 8/21/25</Steel></HeadLine>
              </Heading>
            </Banner>
            <ChartFrame $x={75} $y={421} $w={802} $h={273} $b={2}><PaidChart /></ChartFrame>
            <ChartFrame $x={917} $y={422} $w={796} $h={272} $b={1}><TechChart /></ChartFrame>
            <Macro $x={118} $y={707} $w={425} $h={123}>
              <Shaded $ls={0.1}>Mass Update Master Sheet</Shaded>
              <Shaded $ls={0.1}>(Automatic)</Shaded>
            </Macro>
            <Macro $x={642} $y={707} $w={417} $h={125}><Shaded $ls={0.17}>Update From Survey Response</Shaded></Macro>
            <Trouble $x={1230} $y={734} $w={261} $h={75}>Troubleshoot</Trouble>
          </Sheet>
          <ScrollGutter>
            <VTrack>
              <Arrow d="M5 0.500L10 9.500H0z" />
              <VThumb />
              <Arrow d="M0 0.500h10L5 9.500z" />
            </VTrack>
          </ScrollGutter>
        </SheetArea>

        <SheetTabs>
          <TabNav>
            <Icon w={8} h={13} c="#8c8c8c"><path d="M7 0.500L1 6.500l6 6" /></Icon>
            <Icon w={8} h={13} c="#d0d0d0"><path d="M1 0.500l6 6-6 6" /></Icon>
          </TabNav>
          <ActiveTab><span>Menu</span></ActiveTab>
          {SHEETS.map(([t, w]) => <SheetTab key={t} $w={w}>{t}</SheetTab>)}
          <SheetTab $w={136} $last>Enrol day of the</SheetTab>
          <TabTools>
            <Icon w={14} h={4} c="none"><g fill="#d0d0d0"><circle cx="2" cy="2" r="2" /><circle cx="7" cy="2" r="2" /><circle cx="12" cy="2" r="2" /></g></Icon>
            <Gap $w={25} />
            <Icon w={15} h={15} c="#d0d0d0" s={1.6}><path d="M7.500 0v15M0 7.500h15" /></Icon>
            <Gap $w={31} />
            <Icon w={3} h={14} c="none"><path d="M0 0h3v3H0zM0 5.500h3v3H0zM0 11h3v3H0z" fill="#c8c8c8" /></Icon>
            <Gap $w={19} />
            <HTrack>
              <Arrow d="M9 0v10L0.500 5z" />
              <HThumb />
              <Arrow d="M1 0v10L9.500 5z" />
            </HTrack>
          </TabTools>
        </SheetTabs>

        <StatusBar>
          <Ready>Ready</Ready>
          <Icon w={18} h={16} s={1.4}><path d="M8 14.500H1V1h16v5M1 4h16M3.500 7h4M3.500 10h3" /><circle cx="12.500" cy="10.500" r="4.500" /><circle cx="12.500" cy="10.500" r="1.800" fill="#c8c8c8" /></Icon>
          <Gap $w={22} />
          <Icon w={18} h={18} c="#e0e0e0" s={1.3}>
            <circle cx="8" cy="2.500" r="2" />
            <path d="M1 3.500l1-1 4.500 3h3l4.500-3 1 1-4.500 4v3M1 3.500l4.500 4v4L3 17l1.500 0.500L8 12M10.500 10.500l6.500 7M17 10.500l-6.500 7" />
          </Icon>
          <Access>Accessibility: Investigate</Access>
          <Spacer />
          <ViewButton $on><Icon w={17} h={17} s={1.7}><path d="M1 1h15v15H1zM6 1v15M11 1v15M1 6h15M1 11h15" /></Icon></ViewButton>
          <ViewButton><Icon w={17} h={17} s={1.6}><path d="M1 1h15v15H1zM4.500 3.500h8v10h-8zM6 6.500h5M6 8.500h5M6 10.500h5" /></Icon></ViewButton>
          <ViewButton><Icon w={17} h={17} s={1.6}><path d="M1 1h15v15H1zM1 10h10V1M6 1v9" /></Icon></ViewButton>
          <Gap $w={7} />
          <Icon w={9} h={9} c="#e0e0e0" s={1.3}><path d="M0 4.500h9" /></Icon>
          <Slider><Handle /></Slider>
          <Icon w={10} h={10} c="#e0e0e0" s={1.3}><path d="M0 5h10M5 0v10" /></Icon>
          <Zoom>105%</Zoom>
        </StatusBar>
      </Window>
    </>
  );
}
